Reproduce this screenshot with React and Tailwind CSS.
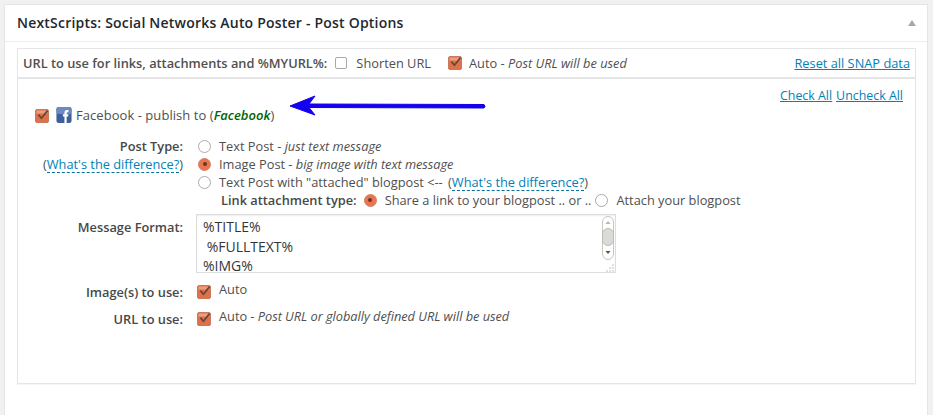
const F = { fontFamily: '"Open Sans", sans-serif' };

function Check({ className = "" }) {
  return (
    <svg width="15" height="15" viewBox="0 0 15 15" className={"shrink-0 " + className}>
      <rect x="0.5" y="1.5" width="13" height="13" rx="1.5" fill="#e0704a" stroke="#c8795c" />
      <rect x="1.5" y="2.5" width="11" height="3" fill="#ee9c7c" />
      <path d="M3.4 6.6 L6.4 10.2 L12.6 2.6" fill="none" stroke="#60483e" strokeWidth="1.7" />
    </svg>
  );
}

function Radio({ on, className = "" }) {
  return on ? (
    <span className={"w-[13px] h-[13px] rounded-full bg-[#ea7650] border border-[#d08468] shrink-0 flex items-center justify-center " + className}>
      <span className="w-[4px] h-[4px] rounded-full bg-[#6b3426]" />
    </span>
  ) : (
    <span className={"w-[13px] h-[13px] rounded-full bg-white border border-[#aaaaaa] shrink-0 " + className} />
  );
}

function Diff({ className = "" }) {
  return (
    <a className={"text-[#0081b8] border-b border-dashed border-[#0b6f9c] leading-[16px] inline-block " + className}>What's the difference?</a>
  );
}

function RadioLine({ on, children }) {
  return (
    <div className="flex items-center h-[18px]">
      <Radio on={on} />
      <span className="ml-[8px] whitespace-pre">{children}</span>
    </div>
  );
}

function Row({ label, className = "", children }) {
  return (
    <div className={"flex " + className}>
      <div className="w-[152px] shrink-0 text-right font-semibold text-[#484848]">{label}</div>
      <div className="ml-[15px] flex-1">{children}</div>
    </div>
  );
}

export default function App() {
  return (
    <div style={F} className="w-[933px] h-[415px] overflow-hidden bg-[#f1f1f1] pt-[4px] pl-[4px] pr-[5px] text-[12.8px] leading-[18px] text-[#4f4f4f]">
      <div className="h-[411px] bg-white border-t border-x border-[#e5e5e5]">
        <div className="h-[37px] border-b border-[#eeeeee] pl-[12px] pr-[11px] flex items-center justify-between">
          <h3 className="text-[14px] font-semibold text-[#23282d] tracking-[0.21px]">NextScripts: Social Networks Auto Poster - Post Options</h3>
          <span className="w-0 h-0 border-x-[4px] border-x-transparent border-b-[6px] border-b-[#a8a8a8]" />
        </div>
        <div className="mt-[6px] ml-[12px] mr-[11px] h-[336px] border border-[#e5e5e5] shadow-[0_1px_1px_rgba(0,0,0,0.04)]">
          <div className="h-[30px] border-b-2 border-[#e5e5e5] pl-[5px] pr-[5px] flex items-center">
            <span className="font-semibold text-[#505050]">URL to use for links, attachments and %MYURL%:</span>
            <span className="ml-[8px] w-[12px] h-[12px] rounded-[2px] border border-[#a9a9a9]" />
            <span className="ml-[9px]">Shorten URL</span>
            <Check className="ml-[17px] mt-[-1px]" />
            <span className="ml-[6px]">Auto - <i>Post URL will be used</i></span>
            <a className="ml-auto text-[#0081b8] underline">Reset all SNAP data</a>
          </div>
          <div className="relative pt-[8px] pl-[17px] pr-[12px]">
            <div className="flex justify-end gap-[4px] text-[12.4px] text-[#0081b8] underline">
              <a>Check All</a>
              <a>Uncheck All</a>
            </div>
            <div className="flex items-center h-[18px] mt-[1px]">
              <Check />
              <svg width="16" height="16" viewBox="0 0 17 18" className="ml-[6px] shrink-0">
                <rect width="17" height="18" rx="2.5" fill="#3f5f9c" />
                <rect width="17" height="8" rx="2.5" fill="#6c8ac0" />
                <path d="M9 18V10.6H7.2V8.2H9V6.4C9 4.4 10.1 3.4 11.9 3.4h1.6v2.4h-1c-.8 0-1 .4-1 1v1.4h2l-.3 2.4h-1.7V18z" fill="#fff" />
              </svg>
              <span className="ml-[4px] text-[13px] tracking-[0.05px]">Facebook - publish to (<i className="font-semibold text-[#006400]">Facebook</i>)</span>
            </div>
            <svg width="200" height="24" viewBox="0 0 200 24" className="absolute left-[271px] top-[16px]">
              <path d="M1 11 L26 1 L20 9 L195 9.5 Q197 11.5 195 13 L20 12.5 L26 20 Z" fill="#1400ee" stroke="#1400ee" strokeLinejoin="round" />
            </svg>
            <div className="mt-[13px] -ml-[4px]">
              <Row label={<>Post Type:<div className="font-normal text-[#4f4f4f]">(<Diff />)</div></>}>
                <RadioLine><>Text Post - <i>just text message</i></></RadioLine>
                <RadioLine on><>Image Post - <i className="tracking-[-0.05px]">big image with text message</i></></RadioLine>
                <RadioLine>
                  <>Text Post with "attached" blogpost {"<--"} <span className="ml-[2px]">(</span><Diff />)</>
                </RadioLine>
                <div className="flex items-center h-[18px] ml-[23px]">
                  <span className="font-semibold text-[#484848]">Link attachment type:</span>
                  <Radio on className="ml-[7px]" />
                  <span className="ml-[8px]">Share a link to your blogpost .. or ..</span>
                  <Radio className="ml-[4px]" />
                  <span className="ml-[8px]">Attach your blogpost</span>
                </div>
              </Row>
              <Row label={<div className="pt-[4px]">Message Format:</div>} className="mt-[5px]">
                <div className="relative w-[420px] h-[59px] border border-[#dddddd] -ml-[2px] pl-[6px] pt-[2px] text-[14px] leading-[20px] text-[#32373c] overflow-hidden whitespace-pre shadow-[inset_0_1px_2px_rgba(0,0,0,0.07)]">
                  <div>%TITLE%</div>
                  <div> %FULLTEXT%</div>
                  <div className="-mt-[1px]">%IMG%</div>
                  <svg width="14" height="58" viewBox="0 0 14 58" className="absolute right-0 top-0">
                    <rect x="1.5" y="1.5" width="11" height="43" rx="5.5" fill="#fff" stroke="#c6c6c2" />
                    <rect x="1.5" y="13.5" width="11" height="17" rx="5.5" fill="#dcdad5" stroke="#bdbdb8" />
                    <path d="M4.5 9 L7 6 L9.5 9Z" fill="#b5b5b5" />
                    <path d="M4.5 36 L7 39 L9.5 36Z" fill="#555" />
                    <path d="M12 49.5v1M9 52.5v1M12 52.5v1M6 55.5v1M9 55.5v1M12 55.5v1" stroke="#9a9a9a" strokeWidth="1.2" />
                  </svg>
                </div>
              </Row>
              <Row label={<div className="pt-[2px]">Image(s) to use:</div>} className="mt-[8px]">
                <div className="flex items-center h-[18px]">
                  <Check className="-ml-[1px] mt-[3px]" />
                  <span className="ml-[7px] -mt-[2px]">Auto</span>
                </div>
              </Row>
              <Row label={<div className="pt-[2px]">URL to use:</div>} className="mt-[7px]">
                <div className="flex items-center h-[18px]">
                  <Check className="-ml-[1px] mt-[3px]" />
                  <span className="ml-[7px] -mt-[2px] tracking-[-0.03px]">Auto - <i>Post URL or globally defined URL will be used</i></span>
                </div>
              </Row>
            </div>
          </div>
        </div>
      </div>
    </div>
  );
}
